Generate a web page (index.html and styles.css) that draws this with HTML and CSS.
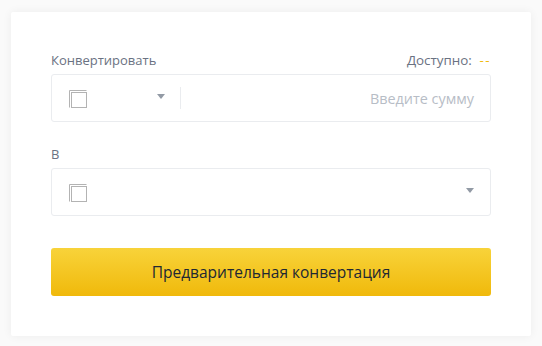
FILE: index.html
```html
<!DOCTYPE html>
<html lang="ru">
<head>
<meta charset="utf-8">
<link rel="stylesheet" href="styles.css">
</head>
<body>
<div class="card">
  <div class="row-label">
    <span class="label">Конвертировать</span>
    <span class="avail">Доступно: <span class="dash">--</span></span>
  </div>
  <div class="field">
    <div class="coin">
      <svg class="img" width="18" height="18" viewBox="0 0 18 18"><path d="M0.5 17.5V0.5H17.5" fill="none" stroke="#b3b3b3"/><rect x="2.5" y="2.5" width="15" height="15" fill="none" stroke="#b3b3b3"/></svg>
      <span class="caret"></span>
    </div>
    <div class="sep"></div>
    <div class="amount">Введите сумму</div>
  </div>
  <div class="row-label second">
    <span class="label">В</span>
  </div>
  <div class="field">
    <div class="coin wide">
      <svg class="img" width="18" height="18" viewBox="0 0 18 18"><path d="M0.5 17.5V0.5H17.5" fill="none" stroke="#b3b3b3"/><rect x="2.5" y="2.5" width="15" height="15" fill="none" stroke="#b3b3b3"/></svg>
      <span class="caret"></span>
    </div>
  </div>
  <button class="btn">Предварительная конвертация</button>
</div>
</body>
</html>
```
FILE: styles.css
```css
html, body { margin: 0; padding: 0; }
body {
  background: #fafafa;
  font-family: "Open Sans", "Noto Sans", sans-serif;
  width: 542px;
  height: 346px;
  padding: 12px 11px;
  box-sizing: border-box;
}
.card {
  background: #fff;
  height: 324px;
  box-sizing: border-box;
  padding: 37px 40px 0 40px;
  border-radius: 2px;
  box-shadow: 0 0 10px rgba(0,0,0,0.06);
}
.row-label {
  display: flex;
  justify-content: space-between;
  align-items: flex-end;
  height: 20px;
  font-size: 13px;
  color: #6a7282;
  margin-bottom: 5px;
}
.row-label.second { margin-top: 21px; }
.label { line-height: 18px; }
.avail { line-height: 18px; font-size: 13.4px; }
.dash { color: #f0b90b; margin-left: 4px; letter-spacing: 1.5px; }
.field {
  height: 48px;
  border: 1px solid #eaecef;
  border-radius: 3px;
  box-sizing: border-box;
  display: flex;
  align-items: center;
}
.coin {
  display: flex;
  align-items: center;
  padding-left: 17px;
  width: 128px;
  box-sizing: border-box;
  justify-content: space-between;
  padding-right: 15px;
}
.coin.wide { width: 100%; padding-right: 16px; }
.img { display: block; margin-top: 2px; }
.caret {
  width: 0; height: 0;
  border-left: 4px solid transparent;
  border-right: 4px solid transparent;
  border-top: 5px solid #929aa5;
  margin-top: -3px;
}
.sep {
  width: 1px;
  height: 22px;
  background: #eaecef;
}
.amount {
  flex: 1;
  text-align: right;
  padding-right: 16px;
  font-size: 14.4px;
  color: #b7bdc6;
}
.btn {
  display: block;
  width: 100%;
  height: 48px;
  margin-top: 32px;
  border: none;
  border-radius: 3px;
  background: linear-gradient(180deg, #f8d33a 0%, #f0b90b 100%);
  font-family: "Open Sans", "Noto Sans", sans-serif;
  font-size: 15.5px;
  color: #212833;
  padding: 0;
}
```
